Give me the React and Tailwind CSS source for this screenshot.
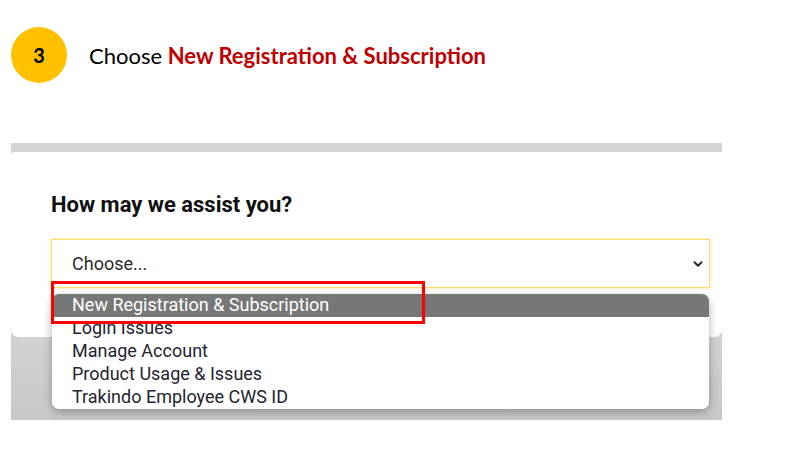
import React from "react";

const options = [
  "New Registration & Subscription",
  "Login Issues",
  "Manage Account",
  "Product Usage & Issues",
  "Trakindo Employee CWS ID",
];

const ChevronDown = () => (
  <svg className="w-[10px] h-[10px] text-[#1f2d3d]" viewBox="0 0 10 10" fill="none">
    <path d="M1.5 3.2 5 6.7 8.5 3.2" stroke="currentColor" strokeWidth="2" strokeLinecap="round" strokeLinejoin="round" />
  </svg>
);

export default function App() {
  return (
    <div className="relative w-[789px] h-[465px] bg-white overflow-hidden">
      {/* step header */}
      <div className="flex items-center pl-[11px] pt-[27px]">
        <div className="w-[56px] h-[56px] rounded-full bg-[#ffc000] flex items-center justify-center text-[20px] font-bold text-black" style={{ fontFamily: "Lato, sans-serif" }}>
          3
        </div>
        <div className="ml-[22px] text-[22px] text-black" style={{ fontFamily: "Lato, sans-serif" }}>
          Choose <span className="font-bold text-[#c00000]">New Registration &amp; Subscription</span>
        </div>
      </div>

      {/* form panel */}
      <div className="mt-[60px] ml-[11px] w-[711px] h-[277px] bg-[#d6d6d6] pt-[9px] flex flex-col">
        <div className="bg-white rounded-b-[8px] rounded-tl-[4px] h-[185px] pl-[40px] pr-[12px] pt-[40px]" style={{ fontFamily: "Roboto, sans-serif" }}>
          <h2 className="text-[22px] font-bold text-[#111] leading-[26px]">How may we assist you?</h2>
          <div className="mt-[21px] h-[49px] border border-[#fcdc6e] shadow-[0_0_3px_rgba(252,214,90,0.7)] flex items-center justify-between pl-[20px] pr-[6px]">
            <span className="text-[18px] text-[#2a2a2a]">Choose...</span>
            <ChevronDown />
          </div>
        </div>
        <div className="flex-1 bg-gradient-to-b from-[#d2d2d2] to-[#c8c8c8]" />
      </div>

      {/* open dropdown */}
      <div className="absolute left-[52px] top-[294px] w-[657px] h-[115px] bg-white rounded-[7px] overflow-hidden shadow-[0_3px_10px_rgba(0,0,0,0.3)]" style={{ fontFamily: "Roboto, sans-serif" }}>
        {options.map((opt, i) => (
          <div
            key={opt}
            className={i === 0 ? "h-[23px] pl-[20px] bg-[#777777] text-white text-[18px] leading-[22px]" : "h-[23px] pl-[20px] text-[#1f2530] text-[18px] leading-[22px]"}
          >
            {opt}
          </div>
        ))}
      </div>

      {/* highlight */}
      <div className="absolute left-[51px] top-[281px] w-[374px] h-[43px] border-[3px] border-[#ff0000]" />
    </div>
  );
}
